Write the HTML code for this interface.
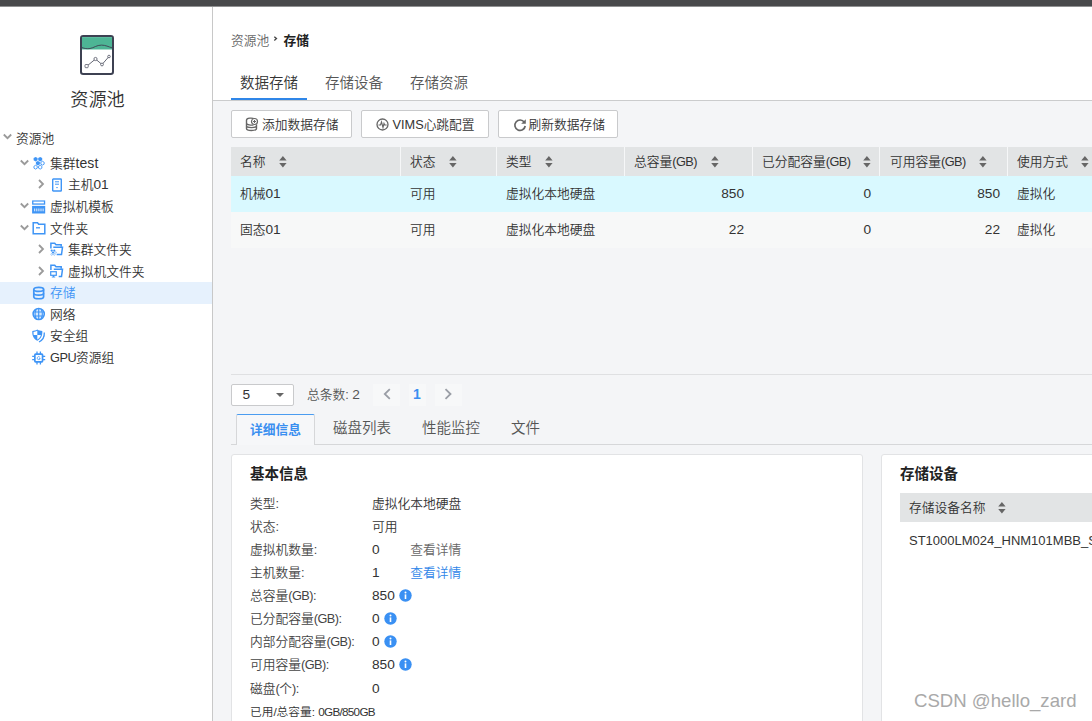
<!DOCTYPE html>
<html lang="zh-CN">
<head>
<meta charset="utf-8">
<title>资源池 - 存储</title>
<style>
*{box-sizing:border-box;margin:0;padding:0}
html,body{width:1092px;height:721px;overflow:hidden;background:#fff}
body{font-family:"Liberation Sans","Noto Sans CJK SC",sans-serif;font-size:12.740px;color:#333;position:relative;letter-spacing:0;font-weight:350}
.abs{position:absolute}
#topbar{left:0;top:0;width:1092px;height:7px;background:#48494b;border-bottom:1px solid #909192}
#side{left:0;top:7px;width:213px;height:714px;background:#fff;border-right:1px solid #c8c8c8}
#sidetitle{left:0;top:86.700px;width:195px;text-align:center;font-size:18.200px;line-height:26px;color:#333;letter-spacing:0}
.tr{position:absolute;left:0;width:212px;height:22px;line-height:22px;font-size:12.740px;color:#333;white-space:nowrap}
.tr.sel{background:#e6f1fd;color:#3f95f6}
.tr span.t{position:absolute;top:0.100px}
.tr svg{position:absolute}
#main{left:213px;top:7px;width:879px;height:714px;background:#f4f5f7}
#hdr{left:213px;top:7px;width:879px;height:94px;background:#fff;border-bottom:1px solid #cbcccd}
.bc{top:31.700px;font-size:12.740px;line-height:18px;white-space:nowrap}
.tab1{top:72.500px;font-size:14.500px;line-height:20px;color:#555;white-space:nowrap;letter-spacing:0}
.btn{top:110px;height:28px;border:1px solid #c9cacc;border-radius:2px;background:#fff;font-size:12.740px;line-height:26px;color:#333;white-space:nowrap}
.btn span{position:absolute;top:0.500px}
.btn svg{position:absolute}
.th{position:absolute;top:146.700px;height:29px;line-height:29px;font-size:12.740px;color:#333;white-space:nowrap}
.row{position:absolute;left:231px;width:861px;height:36px;line-height:36px;font-size:12.740px;color:#333}
.row>span{position:absolute;top:-0.200px;white-space:nowrap}
.r{text-align:right;letter-spacing:0;font-size:13.700px}
.d{font-size:13.700px;letter-spacing:0}
.lc{font-size:14px;letter-spacing:0.100px}
.uc{letter-spacing:-0.500px}
.d,.lc,.uc{line-height:0}
.pg{top:384px;height:22px;background:#f7f8f9;line-height:22px}
.tab2{top:418px;font-size:14.500px;line-height:20px;color:#555;white-space:nowrap;letter-spacing:0}
.card{background:#fff;border:1px solid #e2e3e5;border-radius:3px}
.ctitle{top:464px;font-size:14.500px;font-weight:bold;line-height:20px;color:#222;white-space:nowrap;letter-spacing:0}
.il,.iv{font-size:12.740px;line-height:20px;white-space:nowrap;color:#444}
.iv{color:#333}
</style>
</head>
<body>
<div id="main" class="abs"></div>
<div id="hdr" class="abs"></div>
<div id="side" class="abs"></div>
<div id="topbar" class="abs"></div>

<!-- sidebar big icon -->
<svg class="abs" style="left:79px;top:34.100px" width="36" height="42" viewBox="0 0 36 42">
  <rect x="2" y="2.100" width="32" height="37.900" rx="2.200" fill="#fff" stroke="#3d4152" stroke-width="2"/>
  <rect x="3" y="3.100" width="30" height="12.400" fill="#4db595"/>
  <path d="M3 13.600c2.500 0.900 5 1.400 8 0.900c4 -0.700 6.500 -3.400 11.500 -3.400c4 0 7 1.700 10.500 2.700" fill="none" stroke="#3d4152" stroke-width="0.900"/>
  <path d="M8 32l8.500 -7l6.500 5.500l7 -8" fill="none" stroke="#3d4152" stroke-width="0.800"/>
  <rect x="6" y="30.500" width="3.200" height="3.200" rx="0.800" fill="#fff" stroke="#3d4152" stroke-width="0.700"/>
  <circle cx="16.500" cy="25" r="1.600" fill="#fff" stroke="#3d4152" stroke-width="0.700"/>
  <circle cx="23" cy="30.500" r="1.400" fill="#fff" stroke="#3d4152" stroke-width="0.700"/>
  <circle cx="30" cy="22.500" r="1.300" fill="#fff" stroke="#3d4152" stroke-width="0.700"/>
</svg>
<div id="sidetitle" class="abs">资源池</div>

<!-- tree -->
<div id="tree">
<div class="tr" style="top:128.0px"><svg style="left:2.8px;top:5.2px" width="9" height="8" viewBox="0 0 9 8"><path d="M0.800 1.500l3.700 3.700l3.700-3.700" fill="none" stroke="#9a9a9a" stroke-width="1.800"/></svg><span class="t" style="left:16px;margin-top:0px">资源池</span></div>
<div class="tr" style="top:152.3px"><svg style="left:19.8px;top:6.6px" width="9" height="8" viewBox="0 0 9 8"><path d="M0.800 1.500l3.700 3.700l3.700-3.700" fill="none" stroke="#9a9a9a" stroke-width="1.800"/></svg><svg style="left:32px;top:4px" width="14" height="14" viewBox="0 0 14 14"><polygon points="5.59,4.35 3.60,5.50 1.61,4.35 1.61,2.05 3.60,0.90 5.59,2.05" fill="#3f95f6"/><polygon points="10.19,4.35 8.20,5.50 6.21,4.35 6.21,2.05 8.20,0.90 10.19,2.05" fill="#3f95f6"/><polygon points="7.89,8.35 5.90,9.50 3.91,8.35 3.91,6.05 5.90,4.90 7.89,6.05" fill="#3f95f6"/><polygon points="12.15,8.15 10.50,9.10 8.85,8.15 8.85,6.25 10.50,5.30 12.15,6.25" fill="none" stroke="#3f95f6" stroke-width="0.9"/><polygon points="5.25,12.15 3.60,13.10 1.95,12.15 1.95,10.25 3.60,9.30 5.25,10.25" fill="none" stroke="#3f95f6" stroke-width="0.9"/><polygon points="9.85,12.15 8.20,13.10 6.55,12.15 6.55,10.25 8.20,9.30 9.85,10.25" fill="none" stroke="#3f95f6" stroke-width="0.9"/></svg><span class="t" style="left:50px;margin-top:1px">集群<span class="lc">test</span></span></div>
<div class="tr" style="top:173.7px"><svg style="left:38px;top:5.800px" width="8" height="10" viewBox="0 0 8 10"><path d="M1 1l4 4l-4 4" fill="none" stroke="#9a9a9a" stroke-width="1.800"/></svg><svg style="left:50px;top:4px" width="14" height="14" viewBox="0 0 14 14"><rect x="2.7" y="1" width="8.6" height="12" rx="0.6" fill="none" stroke="#3f95f6" stroke-width="1.4"/><path d="M5 3.8h4M5 6.2h4" stroke="#3f95f6" stroke-width="1"/><path d="M6 9h2l-1 1.6z" fill="#3f95f6"/></svg><span class="t" style="left:68px;margin-top:0px">主机<span class="d">01</span></span></div>
<div class="tr" style="top:195.5px"><svg style="left:19.8px;top:6.6px" width="9" height="8" viewBox="0 0 9 8"><path d="M0.800 1.500l3.700 3.700l3.700-3.700" fill="none" stroke="#9a9a9a" stroke-width="1.800"/></svg><svg style="left:32px;top:4px" width="14" height="14" viewBox="0 0 14 14"><rect x="0.100" y="0.400" width="13.100" height="4.300" fill="#3f95f6"/><rect x="1.400" y="1.600" width="10.500" height="1.800" fill="#fff"/><rect x="0.100" y="5.900" width="13.100" height="7.600" fill="#3f95f6"/><path d="M2.700 8.500v2.800M4.800 8.500v2.800M6.900 8.500v2.800M9 8.500v2.800M11.100 8.500v2.800" stroke="#fff" stroke-width="1" opacity="0.900"/></svg><span class="t" style="left:50px;margin-top:0px">虚拟机模板</span></div>
<div class="tr" style="top:217.1px"><svg style="left:19.8px;top:6.6px" width="9" height="8" viewBox="0 0 9 8"><path d="M0.800 1.500l3.700 3.700l3.700-3.700" fill="none" stroke="#9a9a9a" stroke-width="1.800"/></svg><svg style="left:32px;top:4px" width="14" height="14" viewBox="0 0 14 14"><path d="M1.2 1.7h4.3l1.2 1.6h6.1v9.5h-11.6z" fill="none" stroke="#3f95f6" stroke-width="1.5"/><path d="M4 6.8h4" stroke="#3f95f6" stroke-width="1.3"/></svg><span class="t" style="left:50px;margin-top:1px">文件夹</span></div>
<div class="tr" style="top:238.4px"><svg style="left:38px;top:5.800px" width="8" height="10" viewBox="0 0 8 10"><path d="M1 1l4 4l-4 4" fill="none" stroke="#9a9a9a" stroke-width="1.800"/></svg><svg style="left:50px;top:4px" width="14" height="14" viewBox="0 0 14 14"><path d="M0.9 6.5v-5.3h3.8l1.3 1.6h5.2v2" fill="none" stroke="#3f95f6" stroke-width="1.5"/><path d="M3.3 5.2h9.2l-1 7.4h-4.800" fill="none" stroke="#3f95f6" stroke-width="1.5"/><circle cx="1.700" cy="8.600" r="1.100" fill="#3f95f6"/><circle cx="4.300" cy="8.600" r="1.100" fill="#3f95f6"/><circle cx="3" cy="10.500" r="1.100" fill="#3f95f6"/><circle cx="1.700" cy="12.400" r="0.900" fill="none" stroke="#3f95f6" stroke-width="0.600" opacity="0.700"/><circle cx="4.300" cy="12.400" r="0.900" fill="none" stroke="#3f95f6" stroke-width="0.600" opacity="0.700"/><circle cx="5.700" cy="10.500" r="0.800" fill="none" stroke="#3f95f6" stroke-width="0.600" opacity="0.700"/></svg><span class="t" style="left:68px;margin-top:1px">集群文件夹</span></div>
<div class="tr" style="top:260.1px"><svg style="left:38px;top:5.800px" width="8" height="10" viewBox="0 0 8 10"><path d="M1 1l4 4l-4 4" fill="none" stroke="#9a9a9a" stroke-width="1.800"/></svg><svg style="left:50px;top:4px" width="14" height="14" viewBox="0 0 14 14"><path d="M0.9 6v-4.800h3.800l1.300 1.600h5.200v2" fill="none" stroke="#3f95f6" stroke-width="1.500"/><path d="M3.800 5.200h8.700l-1 7.400h-2.800" fill="none" stroke="#3f95f6" stroke-width="1.500"/><rect x="0.700" y="7.700" width="5.600" height="3.600" fill="#fff" stroke="#3f95f6" stroke-width="1.200"/><path d="M3.500 11.300v1.500M1.800 13h3.400" stroke="#3f95f6" stroke-width="1.100"/></svg><span class="t" style="left:68px;margin-top:1px">虚拟机文件夹</span></div>
<div class="tr sel" style="top:281.7px"><svg style="left:32px;top:4px" width="14" height="14" viewBox="0 0 14 14"><path d="M1.800 3.300c0-2.700 9.800-2.700 9.800 0v7.400c0 2.700-9.800 2.700-9.800 0z" fill="none" stroke="#3f95f6" stroke-width="1.700"/><path d="M1.800 3.500c0 2.500 9.800 2.500 9.800 0M1.800 7.200c0 2.500 9.800 2.500 9.800 0" fill="none" stroke="#3f95f6" stroke-width="1.700"/></svg><span class="t" style="left:50px;margin-top:0px">存储</span></div>
<div class="tr" style="top:303.3px"><svg style="left:32px;top:4px" width="14" height="14" viewBox="0 0 14 14"><circle cx="6.700" cy="7" r="5.600" fill="#d7e9fd" stroke="#3f95f6" stroke-width="1.500"/><path d="M1.500 5h10.400M1.500 9h10.400M6.700 1.500v11M4.300 2c-1.500 3-1.500 7 0 10M9.100 2c1.500 3 1.500 7 0 10" fill="none" stroke="#3f95f6" stroke-width="1.100"/></svg><span class="t" style="left:50px;margin-top:0.6px">网络</span></div>
<div class="tr" style="top:325.1px"><svg style="left:32px;top:4px" width="14" height="14" viewBox="0 0 14 14"><clipPath id="shc"><path d="M5.300 1.700c1.300 0.800 2.500 1.100 3.800 1.200c0.200 3.600-0.900 6-3.800 7.700c-2.900-1.700-4-4.100-3.800-7.700c1.300-0.100 2.500-0.400 3.800-1.200z"/></clipPath><path d="M5.300 0.500c1.600 1 3.200 1.400 5 1.500c0.300 4.600-1.100 7.600-5 9.800c-3.900-2.200-5.300-5.200-5-9.800c1.800-0.100 3.400-0.500 5-1.500z" fill="#3f95f6"/><g clip-path="url(#shc)"><rect x="0" y="0" width="5.300" height="6" fill="#fff"/><rect x="5.300" y="6" width="6" height="6" fill="#fff"/></g><path d="M12.300 3.500c0.300 4.300-1.600 7.600-5.300 9.500" fill="none" stroke="#3f95f6" stroke-width="1.300"/></svg><span class="t" style="left:50px;margin-top:0px">安全组</span></div>
<div class="tr" style="top:346.5px"><svg style="left:32px;top:4px" width="14" height="14" viewBox="0 0 14 14"><rect x="2" y="2.300" width="9.400" height="9.400" rx="1.600" fill="#3f95f6"/><path d="M5 0.500v13M8.400 0.500v13M0.200 5.300h13M0.200 8.700h13" stroke="#3f95f6" stroke-width="1.300"/><rect x="3.700" y="4" width="6" height="6" rx="0.600" fill="#fff"/><path d="M7.800 6.100a1.500 1.500 0 1 0 0.400 1.200h-1.300" fill="none" stroke="#3f95f6" stroke-width="0.800"/></svg><span class="t" style="left:50px;margin-top:0px"><span class="uc">GPU</span>资源组</span></div>

</div>

<!-- breadcrumb -->
<div class="abs bc" style="left:231px;color:#666">资源池</div>
<svg class="abs" style="left:273px;top:35px" width="6" height="8" viewBox="0 0 6 8"><path d="M1.300 1.700l2.200 1.900l-2.200 1.900" fill="none" stroke="#444" stroke-width="1.300"/></svg>
<div class="abs bc" style="left:283.500px;color:#222;font-weight:bold">存储</div>

<!-- top tabs -->
<div class="abs tab1" style="left:240px;color:#333">数据存储</div>
<div class="abs tab1" style="left:325px">存储设备</div>
<div class="abs tab1" style="left:410px">存储资源</div>
<div class="abs" style="left:231px;top:98px;width:76px;height:2px;background:#2f86e8"></div>

<!-- buttons -->
<div class="abs btn" style="left:231px;width:121px"><svg style="left:13px;top:6px" width="14" height="15" viewBox="0 0 14 15"><path d="M1.500 3.200c0-2.400 6-2.600 8-1.200M1.500 3.200v8.300c0 2.600 10 2.600 10 0v-4M1.500 6c0 2 5 2.400 7 1.800M1.500 8.800c0 2.400 10 2.400 10 0" fill="none" stroke="#666" stroke-width="1.400"/><circle cx="9.500" cy="4.500" r="3" fill="#fff" stroke="#666" stroke-width="1.200"/><path d="M8 4.500h3M9.500 3v3" stroke="#666" stroke-width="1"/></svg><span style="left:30px">添加数据存储</span></div>
<div class="abs btn" style="left:361px;width:128px"><svg style="left:14px;top:7px" width="13" height="13" viewBox="0 0 13 13"><circle cx="6.500" cy="6.500" r="5.500" fill="none" stroke="#666" stroke-width="1.300"/><path d="M2.500 7h2l1-3l1.500 5.500l1-4l0.700 1.500h2" fill="none" stroke="#666" stroke-width="1.100"/></svg><span style="left:30.500px">VIMS心跳配置</span></div>
<div class="abs btn" style="left:498px;width:120px"><svg style="left:14px;top:7px" width="14" height="14" viewBox="0 0 14 14"><path d="M11.300 4.200a5.200 5.200 0 1 0 0.900 3.800" fill="none" stroke="#666" stroke-width="1.700"/><path d="M12.800 1.200v4.600h-4.600z" fill="#666"/></svg><span style="left:29.500px">刷新数据存储</span></div>

<!-- table -->
<div class="abs" style="left:231px;top:147px;width:861px;height:29px;background:#e2e4e5"></div>
<div class="abs" style="left:400px;top:147px;width:1px;height:29px;background:#f6f7f8"></div><div class="abs" style="left:496px;top:147px;width:1px;height:29px;background:#f6f7f8"></div><div class="abs" style="left:624px;top:147px;width:1px;height:29px;background:#f6f7f8"></div><div class="abs" style="left:752px;top:147px;width:1px;height:29px;background:#f6f7f8"></div><div class="abs" style="left:879px;top:147px;width:1px;height:29px;background:#f6f7f8"></div><div class="abs" style="left:1007px;top:147px;width:1px;height:29px;background:#f6f7f8"></div>
<div class="th" style="left:240px">名称</div><svg class="abs" style="left:279px;top:155.8px" width="8" height="12" viewBox="0 0 8 12"><path d="M0.200 4.500h7.400l-3.700-4.500zM0.200 7.100h7.400l-3.700 4.500z" fill="#666"/></svg>
<div class="th" style="left:410px">状态</div><svg class="abs" style="left:449px;top:155.8px" width="8" height="12" viewBox="0 0 8 12"><path d="M0.200 4.500h7.400l-3.700-4.500zM0.200 7.100h7.400l-3.700 4.500z" fill="#666"/></svg>
<div class="th" style="left:506px">类型</div><svg class="abs" style="left:545px;top:155.8px" width="8" height="12" viewBox="0 0 8 12"><path d="M0.200 4.500h7.400l-3.700-4.500zM0.200 7.100h7.400l-3.700 4.500z" fill="#666"/></svg>
<div class="th" style="left:634px">总容量<span class="uc">(GB)</span></div><svg class="abs" style="left:711px;top:155.8px" width="8" height="12" viewBox="0 0 8 12"><path d="M0.200 4.500h7.400l-3.700-4.500zM0.200 7.100h7.400l-3.700 4.500z" fill="#666"/></svg>
<div class="th" style="left:762px">已分配容量<span class="uc">(GB)</span></div><svg class="abs" style="left:863px;top:155.8px" width="8" height="12" viewBox="0 0 8 12"><path d="M0.200 4.500h7.400l-3.700-4.500zM0.200 7.100h7.400l-3.700 4.500z" fill="#666"/></svg>
<div class="th" style="left:890px">可用容量<span class="uc">(GB)</span></div><svg class="abs" style="left:979px;top:155.8px" width="8" height="12" viewBox="0 0 8 12"><path d="M0.200 4.500h7.400l-3.700-4.500zM0.200 7.100h7.400l-3.700 4.500z" fill="#666"/></svg>
<div class="th" style="left:1017px">使用方式</div><svg class="abs" style="left:1081px;top:155.8px" width="8" height="12" viewBox="0 0 8 12"><path d="M0.200 4.500h7.400l-3.700-4.500zM0.200 7.100h7.400l-3.700 4.500z" fill="#666"/></svg>
<div class="row" style="top:176px;background:#d9f9ff"><span style="left:9px">机械<span class="d">01</span></span><span style="left:179px">可用</span><span style="left:275px">虚拟化本地硬盘</span><span class="r" style="left:394px;width:119px">850</span><span class="r" style="left:521px;width:119px">0</span><span class="r" style="left:649px;width:120px">850</span><span style="left:786px">虚拟化</span></div>
<div class="row" style="top:212px;background:#f7f8f8"><span style="left:9px">固态<span class="d">01</span></span><span style="left:179px">可用</span><span style="left:275px">虚拟化本地硬盘</span><span class="r" style="left:394px;width:119px">22</span><span class="r" style="left:521px;width:119px">0</span><span class="r" style="left:649px;width:120px">22</span><span style="left:786px">虚拟化</span></div>


<!-- pagination -->
<div class="abs" style="left:231px;top:374px;width:861px;height:1px;background:#dfe0e2"></div>
<div class="abs" style="left:231px;top:384px;width:63px;height:22px;border:1px solid #c9cacc;border-radius:2px;background:#fff;font-size:12.740px;line-height:20px;padding-left:10.400px"><span class="d">5</span></div>
<div class="abs" style="left:276px;top:393px;width:0;height:0;border-left:4px solid transparent;border-right:4px solid transparent;border-top:4px solid #666"></div>
<div class="abs" style="left:307px;top:384.500px;font-size:12.740px;line-height:20px;color:#555;white-space:nowrap">总条数: <span class="d">2</span></div>
<div class="abs pg" style="left:373px;width:27px"></div>
<div class="abs pg" style="left:409px;width:17px;color:#3a8ff0;font-weight:bold;font-size:14px;text-align:center;letter-spacing:0;line-height:20px;padding-right:1px">1</div>
<div class="abs pg" style="left:435px;width:27px"></div>
<svg class="abs" style="left:382px;top:387.300px" width="10" height="14" viewBox="0 0 10 14"><path d="M7.800 2.200L2.800 7l5 4.800" fill="none" stroke="#9a9ea6" stroke-width="1.800"/></svg>
<svg class="abs" style="left:443px;top:387.300px" width="10" height="14" viewBox="0 0 10 14"><path d="M2.500 2.200l5 4.800l-5 4.800" fill="none" stroke="#9a9ea6" stroke-width="1.800"/></svg>

<!-- detail tabs -->
<div class="abs" style="left:231px;top:444px;width:861px;height:1px;background:#d6d7d9"></div>
<div class="abs" style="left:236px;top:414px;width:79px;height:31px;background:#f6f7f9;border:1px solid #d6d7d9;border-top:1px solid #4a9cf0;border-bottom:none;border-radius:2px 2px 0 0;color:#3a8ff0;font-weight:bold;font-size:12.740px;line-height:29.400px;text-align:center;letter-spacing:0">详细信息</div>
<div class="abs tab2" style="left:333px">磁盘列表</div>
<div class="abs tab2" style="left:422px">性能监控</div>
<div class="abs tab2" style="left:511px">文件</div>

<!-- cards -->
<div class="abs card" style="left:231px;top:454px;width:632px;height:280px"></div>
<div class="abs card" style="left:881px;top:454px;width:231px;height:280px"></div>
<div class="abs ctitle" style="left:250px">基本信息</div>
<div class="abs ctitle" style="left:900px">存储设备</div>
<div class="abs il" style="left:250px;top:493.7px">类型:</div><div class="abs iv" style="left:372px;top:493.7px">虚拟化本地硬盘</div>
<div class="abs il" style="left:250px;top:516.8px">状态:</div><div class="abs iv" style="left:372px;top:516.8px">可用</div>
<div class="abs il" style="left:250px;top:539.9px">虚拟机数量:</div><div class="abs iv" style="left:372px;top:539.9px"><span class="d">0</span></div><div class="abs iv" style="left:410.200px;top:539.9px;color:#666">查看详情</div>
<div class="abs il" style="left:250px;top:563.0px">主机数量:</div><div class="abs iv" style="left:372px;top:563.0px"><span class="d">1</span></div><div class="abs iv" style="left:410.200px;top:563.0px;color:#2f86e8">查看详情</div>
<div class="abs il" style="left:250px;top:586.1px">总容量<span class="uc">(GB)</span>:</div><div class="abs iv" style="left:372px;top:586.1px"><span class="d">850</span></div><svg class="abs" style="left:398.5px;top:588.6px" width="13" height="13" viewBox="0 0 13 13"><circle cx="6.500" cy="6.500" r="6.200" fill="#3a90f3"/><rect x="5.700" y="5.400" width="1.600" height="4.600" fill="#fff"/><circle cx="6.500" cy="3.500" r="1" fill="#fff"/></svg>
<div class="abs il" style="left:250px;top:609.2px">已分配容量<span class="uc">(GB)</span>:</div><div class="abs iv" style="left:372px;top:609.2px"><span class="d">0</span></div><svg class="abs" style="left:383.5px;top:611.7px" width="13" height="13" viewBox="0 0 13 13"><circle cx="6.500" cy="6.500" r="6.200" fill="#3a90f3"/><rect x="5.700" y="5.400" width="1.600" height="4.600" fill="#fff"/><circle cx="6.500" cy="3.500" r="1" fill="#fff"/></svg>
<div class="abs il" style="left:250px;top:632.3px">内部分配容量<span class="uc">(GB)</span>:</div><div class="abs iv" style="left:372px;top:632.3px"><span class="d">0</span></div><svg class="abs" style="left:383.5px;top:634.8px" width="13" height="13" viewBox="0 0 13 13"><circle cx="6.500" cy="6.500" r="6.200" fill="#3a90f3"/><rect x="5.700" y="5.400" width="1.600" height="4.600" fill="#fff"/><circle cx="6.500" cy="3.500" r="1" fill="#fff"/></svg>
<div class="abs il" style="left:250px;top:655.4px">可用容量<span class="uc">(GB)</span>:</div><div class="abs iv" style="left:372px;top:655.4px"><span class="d">850</span></div><svg class="abs" style="left:398.5px;top:657.9px" width="13" height="13" viewBox="0 0 13 13"><circle cx="6.500" cy="6.500" r="6.200" fill="#3a90f3"/><rect x="5.700" y="5.400" width="1.600" height="4.600" fill="#fff"/><circle cx="6.500" cy="3.500" r="1" fill="#fff"/></svg>
<div class="abs il" style="left:250px;top:678.5px">磁盘<span class="uc">(</span>个<span class="uc">)</span>:</div><div class="abs iv" style="left:372px;top:678.5px"><span class="d">0</span></div>
<div class="abs" style="left:250px;top:702.800px;font-size:11.700px;line-height:18px;color:#333;white-space:nowrap">已用/总容量: <span style="letter-spacing:-0.700px">0GB/850GB</span></div>

<div class="abs" style="left:900px;top:493px;width:192px;height:29px;background:#e2e4e5;line-height:29px;font-size:12.740px;padding-left:9px;white-space:nowrap">存储设备名称</div>
<svg class="abs" style="left:998px;top:501.8px" width="8" height="12" viewBox="0 0 8 12"><path d="M0.200 4.500h7.400l-3.700-4.500zM0.200 7.100h7.400l-3.700 4.500z" fill="#666"/></svg>
<div class="abs" style="left:909px;top:530.700px;font-size:13px;line-height:20px;white-space:nowrap;width:183px;overflow:hidden;letter-spacing:0">ST1000LM024_HNM101MBB_S30YJ9</div>
<div class="abs" style="left:914px;top:687.500px;font-size:18.600px;line-height:26px;color:#a9a9a9;white-space:nowrap;letter-spacing:0;text-shadow:0 0 1px #fff">CSDN @hello_zard</div>
</body>
</html>
